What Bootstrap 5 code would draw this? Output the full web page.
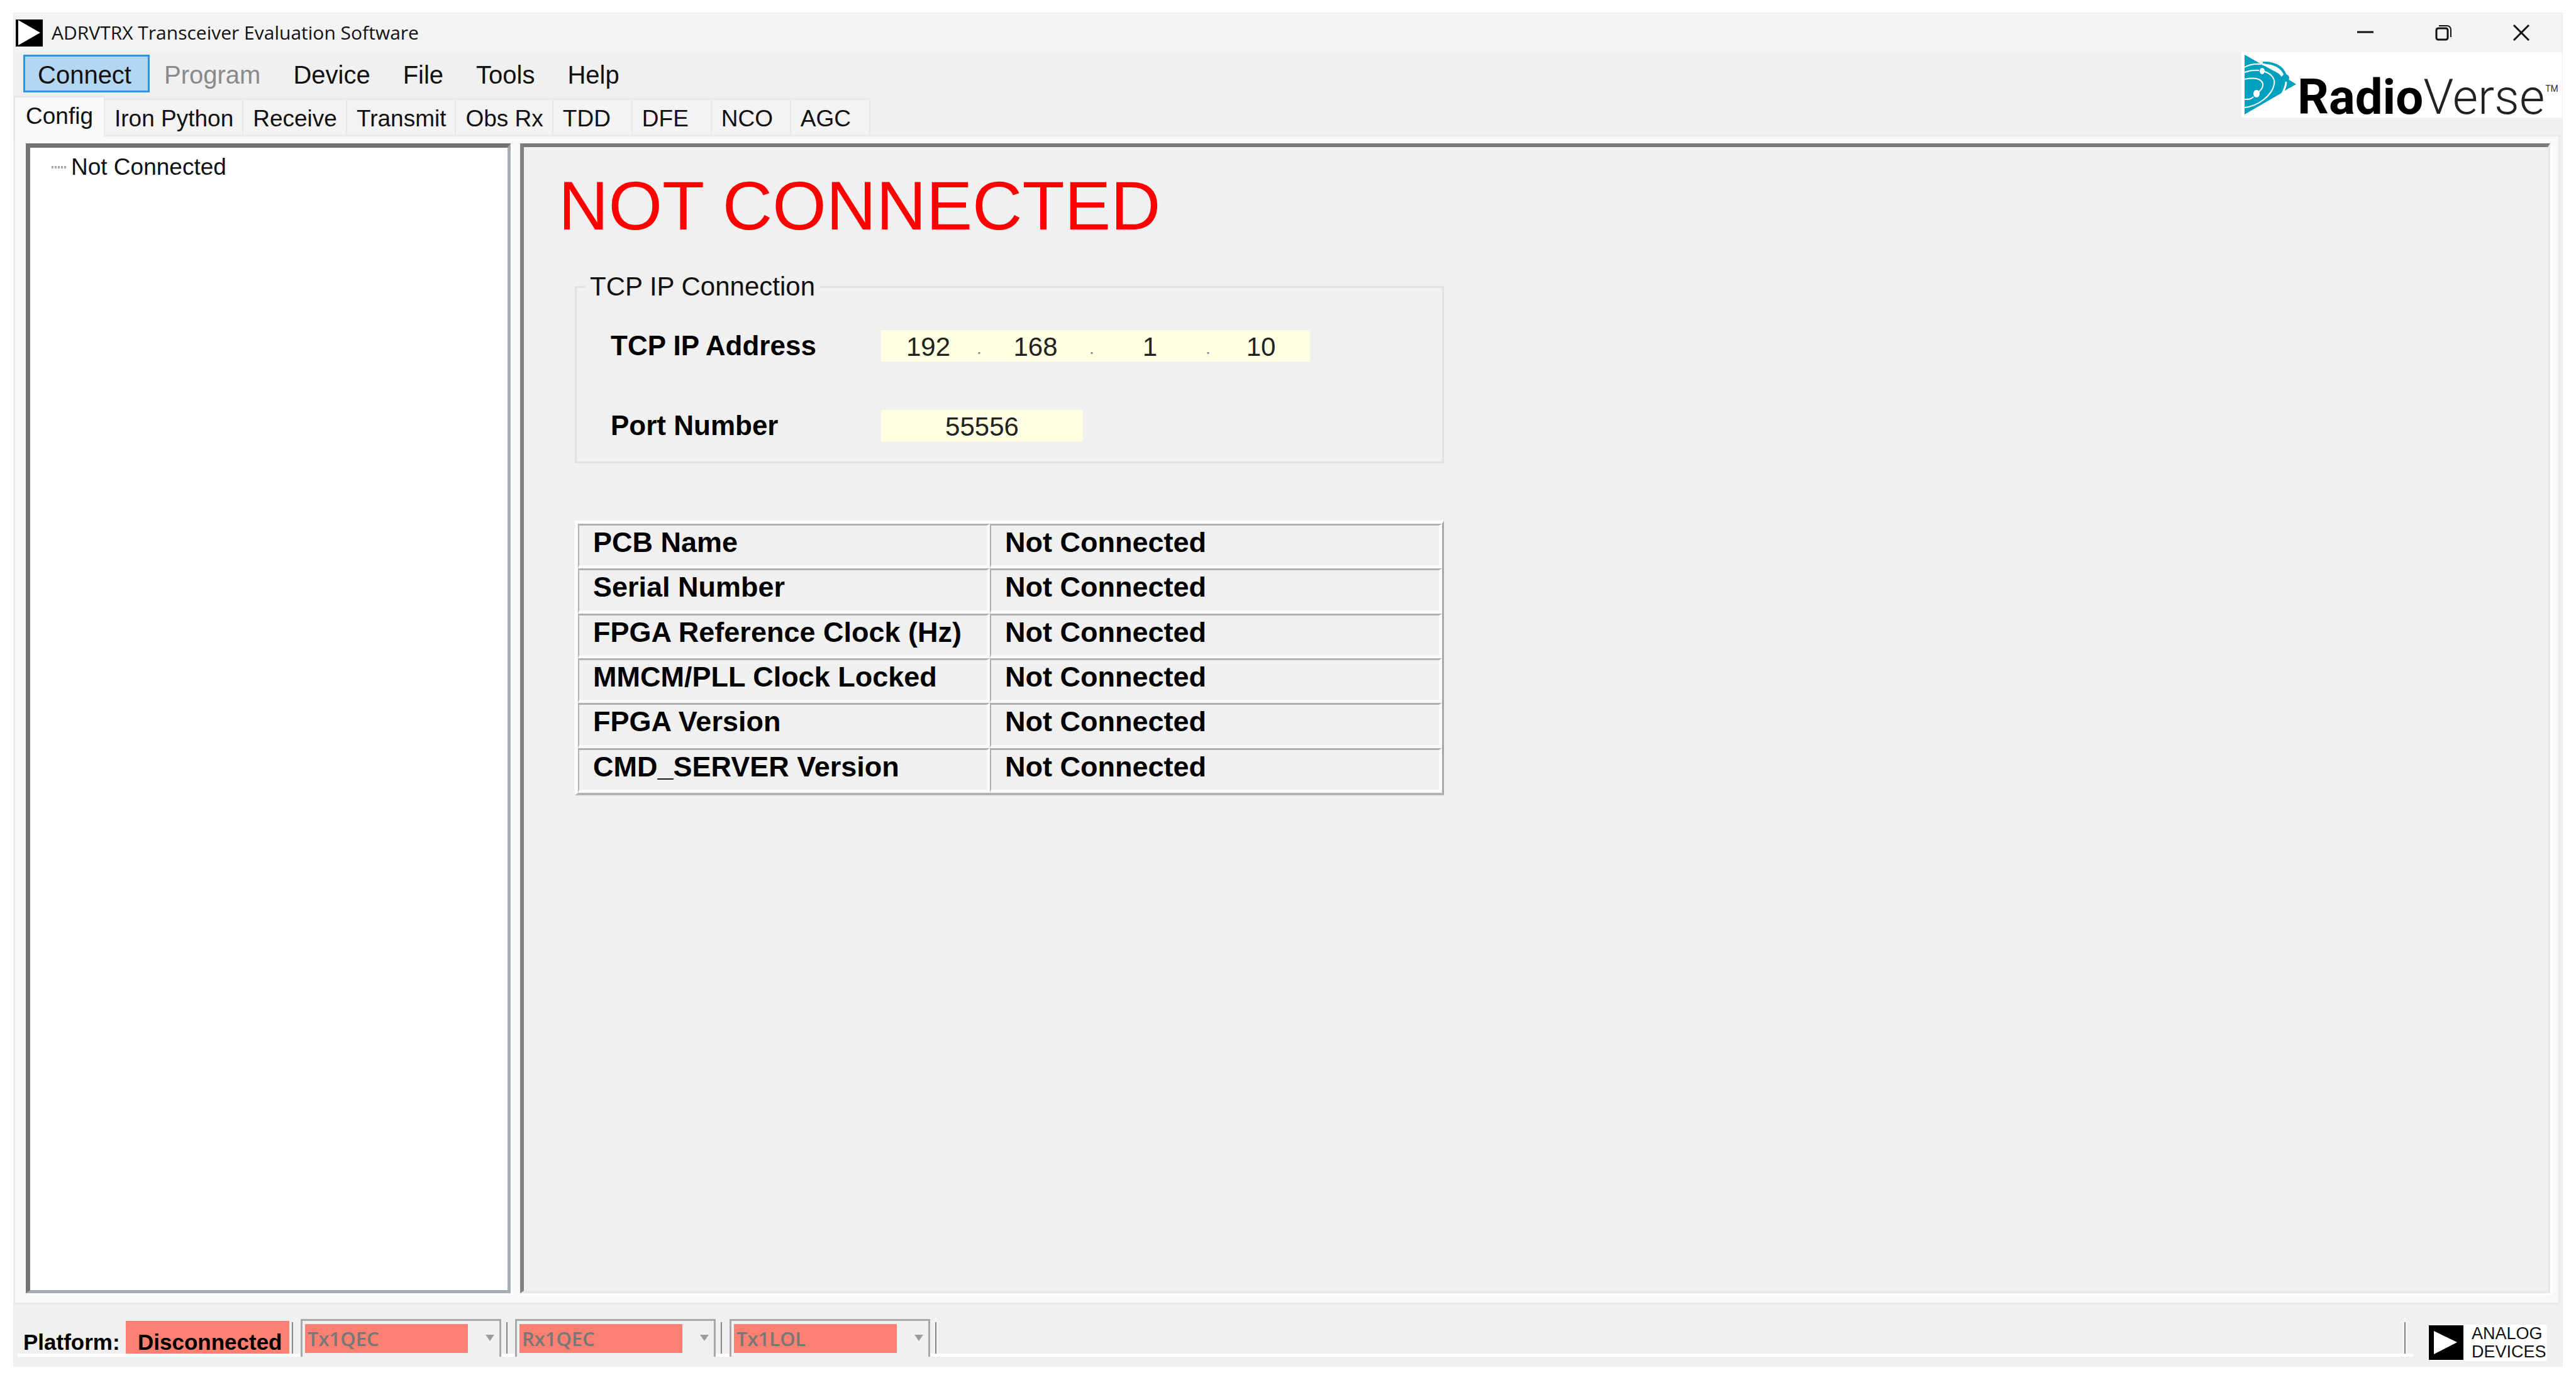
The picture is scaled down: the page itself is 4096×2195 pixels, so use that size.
<!DOCTYPE html>
<html lang="en">
<head>
<meta charset="utf-8">
<meta name="viewport" content="width=device-width, initial-scale=1">
<title>ADRVTRX Transceiver Evaluation Software</title>
<link href="https://cdn.jsdelivr.net/npm/bootstrap@5.3.0/dist/css/bootstrap.min.css" rel="stylesheet">
<style>
  body { font-family: "Liberation Sans", Arial, sans-serif; font-size: 37px; line-height: 42px; color: #111; background: #fff; padding: 21px 22px 22px; }
  .app-window { background: #f0f0f0; outline: 1px solid #ececec; }

  /* title bar */
  .title-bar { height: 62px; background: #f3f3f3; padding: 0 3px; }
  .title-text { font-family: "Open Sans", "Noto Sans", sans-serif; font-size: 30px; line-height: 44px; font-weight: 400; margin: 0 0 0 14px; color: #111; }
  .win-btn { width: 124px; height: 58px; border: 0; background: none; padding: 0; display: flex; align-items: center; justify-content: center; }

  /* menu and tabs */
  .app-head { height: 134px; border-bottom: 3px solid #e9e9e9; }
  .menu-bar { padding: 4px 0 0 15px; }
  .menu-btn { border: 3px solid transparent; border-radius: 0; background: none; font-size: 40px; line-height: 50px; padding: 4px 26px 0 20px; color: #111; }
  .menu-btn.is-on { background: #b3d7f3; border-color: #2f94e0; }
  .menu-btn:disabled { color: #8a8a8a; }
  .tab-btn { min-width: 126px; height: 58px; border: 2px solid #e8e8e8; border-width: 3px 2px 0 0; background: #f3f3f3; color: #111; padding: 4px 14px 0 15px; text-align: left; line-height: 50px; }
  .tab-btn.is-on { width: 145px; height: 65px; margin-bottom: -3px; border-left-width: 2px; background: #f9f9f9; padding: 0 0 2px 17px; }
  .brand-box { width: 510px; height: 104px; background: #fff; padding: 4px 9px 0 4px; }
  .brand-word { font-family: Roboto, sans-serif; font-size: 78px; line-height: 64px; color: #000; margin-left: 1px; }
  .brand-bold { font-weight: 700; }
  .brand-thin { font-weight: 300; color: #222; }
  .brand-tm { font-family: Roboto, sans-serif; font-size: 14px; line-height: 16px; margin: 46px 0 0 1px; color: #333; }

  /* page */
  .tab-page { background: #f9f9f9; border: 2px solid #e9e9e9; border-width: 0 2px 3px; margin-right: 4px; padding: 11px 13px 15px 17px; gap: 15px; }
  .tree-box { width: 771px; background: #fff; border: 5px solid #a7abb3; border-top: 7px solid #737373; border-left: 7px solid #737373; padding: 10px 0 0 34px; box-shadow: 3px 3px 0 #fff; }
  .tree-dash { width: 25px; height: 4px; margin-right: 6px; background: repeating-linear-gradient(90deg, #aaa 0 3px, #fff 3px 5px); }
  .config-box { background: #f0f0f0; border: 4px solid #e8e8e8; border-top: 6px solid #7a7a7a; border-left: 6px solid #808080; padding: 30px 0 0 55px; box-shadow: 3px 3px 0 #fff; }
  .state-title { font-size: 110px; line-height: 126px; font-weight: 400; color: #f00; margin: 0 0 42px; }
  .config-body { width: 1382px; margin-left: 26px; }
  .ip-group { border: 3px solid #e0e0e0; padding: 45px 0 32px 54px; }
  .ip-group legend { float: none; width: auto; font-size: 42px; line-height: 48px; margin: 0 0 0 -40px; padding: 0 7px; }
  .ip-label { width: 430px; font-size: 44px; line-height: 50px; font-weight: 700; color: #000; }
  .field-row + .field-row { margin-top: 77px; }
  .ip-parts { width: 682px; display: grid; grid-template-columns: 150px 12px 167px 12px 173px 12px 1fr; background: #ffffe1; }
  .num-field { width: 100%; min-width: 0; height: 50px; border: 0; border-radius: 0; background: #ffffe1; font-size: 42px; line-height: 46px; text-align: center; padding: 4px 0 0; color: #222; }
  .port-field { width: 321px; }
  .ip-dot { font-size: 28px; line-height: 42px; padding-top: 8px; color: #888; text-align: center; }

  .info-grid { width: 100%; height: 437px; margin: 91px 0 0; table-layout: fixed; border-collapse: separate; border-spacing: 0; border: 5px solid #fbfbfb; border-right: 3px solid #a8a8a8; border-bottom: 4px solid #b4b4b4; font-size: 45px; line-height: 54px; color: #000; }
  .info-grid th, .info-grid td { font-weight: 700; vertical-align: top; padding: 0 0 0 22px; white-space: nowrap; border: 3px solid #b0b0b0; border-left-width: 2px; border-right: 5px solid #fbfbfb; border-bottom: 5px solid #fbfbfb; }
  .info-grid th { width: 655px; }

  /* status bar */
  .status-bar { height: 98px; padding: 0 24px 0 6px; }
  .status-strip { height: 60px; margin-top: 23px; border-bottom: 5px solid #fcfdff; font-size: 35px; line-height: 37px; font-weight: 700; color: #000; }
  .plat-name { width: 172px; padding-left: 9px; }
  .plat-state { width: 260px; height: 52px; background: #fa8072; padding: 15px 0 0 19px; }
  .v-line { width: 2px; height: 50px; background: #858585; margin: 0 12px 0 8px; }
  .v-line.near { margin-left: 4px; }
  .drop-frame { width: 319px; height: 60px; margin-bottom: -5px; background: #f0f0f0; border: 3px solid #a8a8a8; border-bottom: 0; padding: 5px 4px 0; }
  .drop-frame select { appearance: none; width: 259px; height: 46px; border: 0; border-radius: 0; background: #fa8072; color: #777; opacity: 1; padding: 0 0 0 4px; font-family: "Open Sans", "Noto Sans", sans-serif; font-size: 31px; line-height: 44px; font-weight: 600; }
  .drop-frame svg { margin: 17px 4px 0 auto; }
  .adi-box { width: 189px; height: 58px; margin-top: 32px; background: #fff; }
  .adi-word { font-size: 27px; line-height: 29px; margin-left: 12px; color: #111; }
</style>
</head>
<body class="d-flex flex-column min-vh-100">
<div class="app-window d-flex flex-column flex-grow-1">

  <header class="title-bar d-flex align-items-center">
    <svg width="43" height="43" viewBox="0 0 43 43" aria-hidden="true"><path fill="#000" d="M0 0h43v43H0z"/><path fill="#fff" d="M4 1v40l35-20z"/></svg>
    <h1 class="title-text me-auto">ADRVTRX Transceiver Evaluation Software</h1>
    <button class="win-btn" type="button" aria-label="Minimize"><svg width="26" height="26" viewBox="0 0 26 26"><path d="M0 12h26" stroke="#111" stroke-width="3"/></svg></button>
    <button class="win-btn" type="button" aria-label="Restore"><svg width="26" height="26" viewBox="0 0 26 26" fill="none" stroke="#111" stroke-width="3"><rect x="2" y="6" width="18" height="18" rx="3"/><path d="M6 2h13a6 6 0 0 1 6 6V20" stroke-width="2"/></svg></button>
    <button class="win-btn" type="button" aria-label="Close"><svg width="26" height="26" viewBox="0 0 26 26"><path d="M1 1l24 24M25 1L1 25" stroke="#111" stroke-width="3"/></svg></button>
  </header>

  <div class="app-head d-flex">
    <div class="d-flex flex-column flex-grow-1">
      <nav class="menu-bar d-flex" aria-label="Main menu">
        <button class="menu-btn is-on" type="button">Connect</button>
        <button class="menu-btn" type="button" disabled>Program</button>
        <button class="menu-btn" type="button">Device</button>
        <button class="menu-btn" type="button">File</button>
        <button class="menu-btn" type="button">Tools</button>
        <button class="menu-btn" type="button">Help</button>
      </nav>
      <div class="d-flex align-items-end mt-auto" role="tablist">
        <button class="tab-btn is-on" type="button" role="tab" aria-selected="true">Config</button>
        <button class="tab-btn" type="button" role="tab">Iron Python</button>
        <button class="tab-btn" type="button" role="tab">Receive</button>
        <button class="tab-btn" type="button" role="tab">Transmit</button>
        <button class="tab-btn" type="button" role="tab">Obs Rx</button>
        <button class="tab-btn" type="button" role="tab">TDD</button>
        <button class="tab-btn" type="button" role="tab">DFE</button>
        <button class="tab-btn" type="button" role="tab">NCO</button>
        <button class="tab-btn" type="button" role="tab">AGC</button>
      </div>
    </div>
    <div class="brand-box d-flex">
      <svg class="flex-shrink-0" width="84" height="96" viewBox="0 0 84 96" aria-hidden="true">
        <path fill="#00a0bf" d="M1 0L24 13L61 33L83 47L67 56L58 62L1 95z"/>
        <path fill="none" stroke="#00a0bf" stroke-width="4" d="M30 13C47 12 61 19 66 33"/>
        <path fill="none" stroke="#fff" stroke-width="3" d="M29 15C42 17 53 24 61 34"/>
        <circle cx="66" cy="37" r="6" fill="#00a0bf"/>
        <g fill="none" stroke="#fff" stroke-width="2">
          <path d="M1 20C8 16 16 14 28 15"/>
          <path d="M1 28C9 25 16 24 24 25M33 27C43 30 50 38 48 47C45 65 22 82 1 84"/>
          <path d="M1 39C16 36 27 37 30 46C31 52 27 56 23 60M15 67C12 71 7 71 1 71"/>
          <path stroke-width="3" d="M67 43C67 50 64 56 61 62"/>
        </g>
        <ellipse cx="29" cy="26" rx="4" ry="5" fill="#fff"/>
        <ellipse cx="20" cy="62" rx="5" ry="6" fill="#fff"/>
      </svg>
      <div class="brand-word d-flex align-self-end"><span class="brand-bold">Radio</span><span class="brand-thin">Verse</span></div>
      <span class="brand-tm">TM</span>
    </div>
  </div>

  <main class="tab-page d-flex flex-grow-1">
    <aside class="tree-box flex-shrink-0">
      <div class="d-flex align-items-center"><span class="tree-dash"></span><span>Not Connected</span></div>
    </aside>
    <section class="config-box flex-grow-1">
      <h2 class="state-title">NOT CONNECTED</h2>
      <form class="config-body">
        <fieldset class="ip-group">
          <legend>TCP IP Connection</legend>
          <div class="field-row d-flex">
            <label class="ip-label" for="ip1">TCP IP Address</label>
            <div class="ip-parts">
              <input class="num-field" id="ip1" type="text" value="192">
              <span class="ip-dot">.</span>
              <input class="num-field" type="text" value="168" aria-label="Second part">
              <span class="ip-dot">.</span>
              <input class="num-field" type="text" value="1" aria-label="Third part">
              <span class="ip-dot">.</span>
              <input class="num-field" type="text" value="10" aria-label="Fourth part">
            </div>
          </div>
          <div class="field-row d-flex">
            <label class="ip-label" for="port">Port Number</label>
            <input class="num-field port-field" id="port" type="text" value="55556">
          </div>
        </fieldset>
        <table class="info-grid">
          <tbody>
            <tr><th scope="row">PCB Name</th><td>Not Connected</td></tr>
            <tr><th scope="row">Serial Number</th><td>Not Connected</td></tr>
            <tr><th scope="row">FPGA Reference Clock (Hz)</th><td>Not Connected</td></tr>
            <tr><th scope="row">MMCM/PLL Clock Locked</th><td>Not Connected</td></tr>
            <tr><th scope="row">FPGA Version</th><td>Not Connected</td></tr>
            <tr><th scope="row">CMD_SERVER Version</th><td>Not Connected</td></tr>
          </tbody>
        </table>
      </form>
    </section>
  </main>

  <footer class="status-bar d-flex">
    <div class="status-strip d-flex align-items-end flex-grow-1">
      <span class="plat-name">Platform:</span>
      <span class="plat-state">Disconnected</span>
      <span class="v-line near"></span>
      <div class="drop-frame d-flex align-items-start"><select disabled aria-label="Tx1QEC"><option>Tx1QEC</option></select><svg width="14" height="10" viewBox="0 0 14 10" aria-hidden="true"><path fill="#9c9c9c" d="M0 0h14L7 10z"/></svg></div>
      <span class="v-line"></span>
      <div class="drop-frame d-flex align-items-start"><select disabled aria-label="Rx1QEC"><option>Rx1QEC</option></select><svg width="14" height="10" viewBox="0 0 14 10" aria-hidden="true"><path fill="#9c9c9c" d="M0 0h14L7 10z"/></svg></div>
      <span class="v-line"></span>
      <div class="drop-frame d-flex align-items-start"><select disabled aria-label="Tx1LOL"><option>Tx1LOL</option></select><svg width="14" height="10" viewBox="0 0 14 10" aria-hidden="true"><path fill="#9c9c9c" d="M0 0h14L7 10z"/></svg></div>
      <span class="v-line"></span>
      <span class="v-line ms-auto"></span>
    </div>
    <div class="adi-box d-flex ms-4">
      <svg class="flex-shrink-0" width="57" height="57" viewBox="0 0 57 57" aria-hidden="true"><path fill="#000" d="M1 1h55v55H1z"/><path fill="#fff" d="M9 10v37l37-19z"/></svg>
      <div class="adi-word">ANALOG<br>DEVICES</div>
    </div>
  </footer>
</div>
<script src="https://cdn.jsdelivr.net/npm/bootstrap@5.3.0/dist/js/bootstrap.bundle.min.js"></script>
</body>
</html>
